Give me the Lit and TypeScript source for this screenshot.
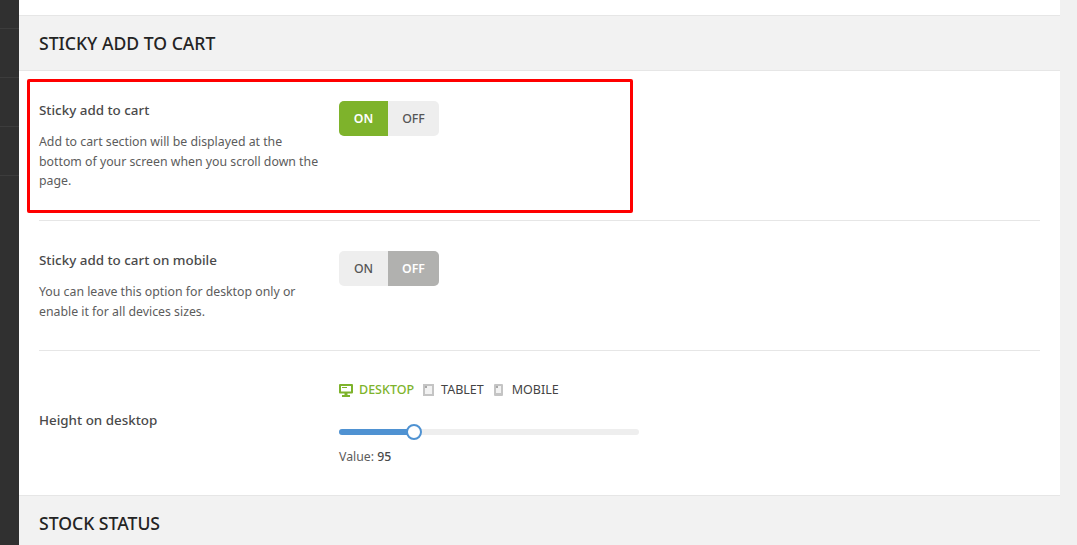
import { LitElement, html, css } from "lit";
import { customElement } from "lit/decorators.js";

@customElement("app-root")
export class AppRoot extends LitElement {
  static styles = css`
    :host { display: block; height: 545px; overflow: hidden; background: #f1f1f1; font-family: "Noto Sans", "Open Sans", sans-serif; font-size: 12.3px; color: #555; }
    .page { display: flex; height: 545px; overflow: hidden; position: relative; }
    .side { width: 19px; flex: none; background: #303030; display: flex; flex-direction: column; padding-top: 28px; box-sizing: border-box; }
    .side i { display: block; height: 49px; flex: none; border-top: 1px solid #3c3c3c; box-sizing: border-box; }
    .main { width: 1041px; flex: none; background: #fff; padding-top: 15px; box-sizing: border-box; }
    .band { height: 56px; box-sizing: border-box; background: #f2f2f2; border-top: 1px solid #e6e6e6; border-bottom: 1px solid #e6e6e6; padding: 0 20px; display: flex; align-items: center; font-size: 17.6px; font-weight: 500; color: #242424; }
    .band.last { border-bottom: 0; height: 60px; padding-bottom: 5px; }
    .rows { padding: 0 20px; }
    .row { display: grid; grid-template-columns: 300px 1fr; padding: 29px 0; border-bottom: 1px solid #e6e6e6; }
    .row.a { height: 150px; box-sizing: border-box; }
    .row.b { height: 130px; box-sizing: border-box; }
    .row.c { height: 144px; box-sizing: border-box; border-bottom: 0; padding: 0; }
    .title { font-size: 13.4px; line-height: 20px; font-weight: 500; color: #4a4a4a; }
    .desc { margin-top: 12px; padding-right: 20px; line-height: 19.6px; color: #5c5c5c; }
    .c .info { align-self: center; margin-top: -6px; }
    .toggle { display: grid; grid-template-columns: 49px 51px; width: 100px; height: 35px; margin-top: 1px; border-radius: 5px; overflow: hidden; font-weight: 500; line-height: 35px; text-align: center; background: #eee; color: #555; }
    .toggle .on { background: #7eb32b; color: #fff; font-weight: 600; }
    .toggle .off { background: #b1b1af; color: #fff; font-weight: 600; }
    .ctl { padding-top: 29px; }
    .tabs { display: flex; align-items: center; height: 20px; color: #444; line-height: 20px; font-size: 12.5px; }
    .tab { display: flex; align-items: center; margin-right: 10px; }
    .tab svg { display: block; margin-right: 7px; }
    .tab.phone svg { margin-right: 9px; }
    .tab.active svg { margin-right: 6px; }
    .tab.active { color: #7eb32b; font-weight: 500; margin-right: 9px; }
    .slider { position: relative; width: 300px; height: 6px; margin-top: 29px; border-radius: 3px; background: #eee; }
    .fill { height: 6px; border-radius: 3px 0 0 3px; background: #4f92d2; }
    .knob { position: absolute; top: -5px; left: 67px; width: 16px; height: 16px; box-sizing: border-box; border: 2px solid #4f92d2; border-radius: 50%; background: #fff; }
    .value { margin-top: 12px; line-height: 20px; color: #5c5c5c; }
    .value b { font-weight: 500; color: #4a4a4a; }
    .mark { position: absolute; left: 27px; top: 79px; width: 606px; height: 134px; box-sizing: border-box; border: 3px solid #f00; border-radius: 2px; pointer-events: none; }
  `;

  private toggle(on: boolean) {
    return html`<div class="toggle"><span class=${on ? "on" : ""}>ON</span><span class=${on ? "" : "off"}>OFF</span></div>`;
  }

  render() {
    return html`
      <div class="page">
        <div class="side"><i></i><i></i><i></i><i></i></div>
        <div class="main">
          <div class="band">STICKY ADD TO CART</div>
          <div class="rows">
            <div class="row a">
              <div class="info">
                <div class="title">Sticky add to cart</div>
                <div class="desc">Add to cart section will be displayed at the bottom of your screen when you scroll down the page.</div>
              </div>
              ${this.toggle(true)}
            </div>
            <div class="row b">
              <div class="info">
                <div class="title">Sticky add to cart on mobile</div>
                <div class="desc">You can leave this option for desktop only or enable it for all devices sizes.</div>
              </div>
              ${this.toggle(false)}
            </div>
            <div class="row c">
              <div class="info"><div class="title">Height on desktop</div></div>
              <div class="ctl">
                <div class="tabs">
                  <div class="tab active">
                    <svg width="14" height="13" viewBox="0 0 14 13"><path fill="#7eb32b" fill-rule="evenodd" d="M1 0h12a1 1 0 0 1 1 1v7.500a1 1 0 0 1-1 1H8.500V11H11v2H3v-2h2.500V9.500H1a1 1 0 0 1-1-1V1a1 1 0 0 1 1-1zm1 2v5.500h10V2z"/><path fill="#7eb32b" d="M3 3h5v1H3z"/></svg>
                    DESKTOP
                  </div>
                  <div class="tab">
                    <svg width="11" height="12" viewBox="0 0 11 12"><rect width="11" height="12" fill="#c4c4c4"/><path fill="#f2f2f2" d="M2 2h7v8H2z"/><path fill="#a8a8a8" d="M2 2h2v2H2z"/></svg>
                    TABLET
                  </div>
                  <div class="tab phone">
                    <svg width="9" height="12" viewBox="0 0 9 12"><rect width="9" height="12" rx="1" fill="#c4c4c4"/><path fill="#f2f2f2" d="M2 2h5v7H2z"/><path fill="#a8a8a8" d="M2 2h2v2H2z"/></svg>
                    MOBILE
                  </div>
                </div>
                <div class="slider"><div class="fill" style="width: 75px"></div><div class="knob"></div></div>
                <div class="value">Value: <b>95</b></div>
              </div>
            </div>
          </div>
          <div class="band last">STOCK STATUS</div>
        </div>
        <div class="mark"></div>
      </div>
    `;
  }
}
